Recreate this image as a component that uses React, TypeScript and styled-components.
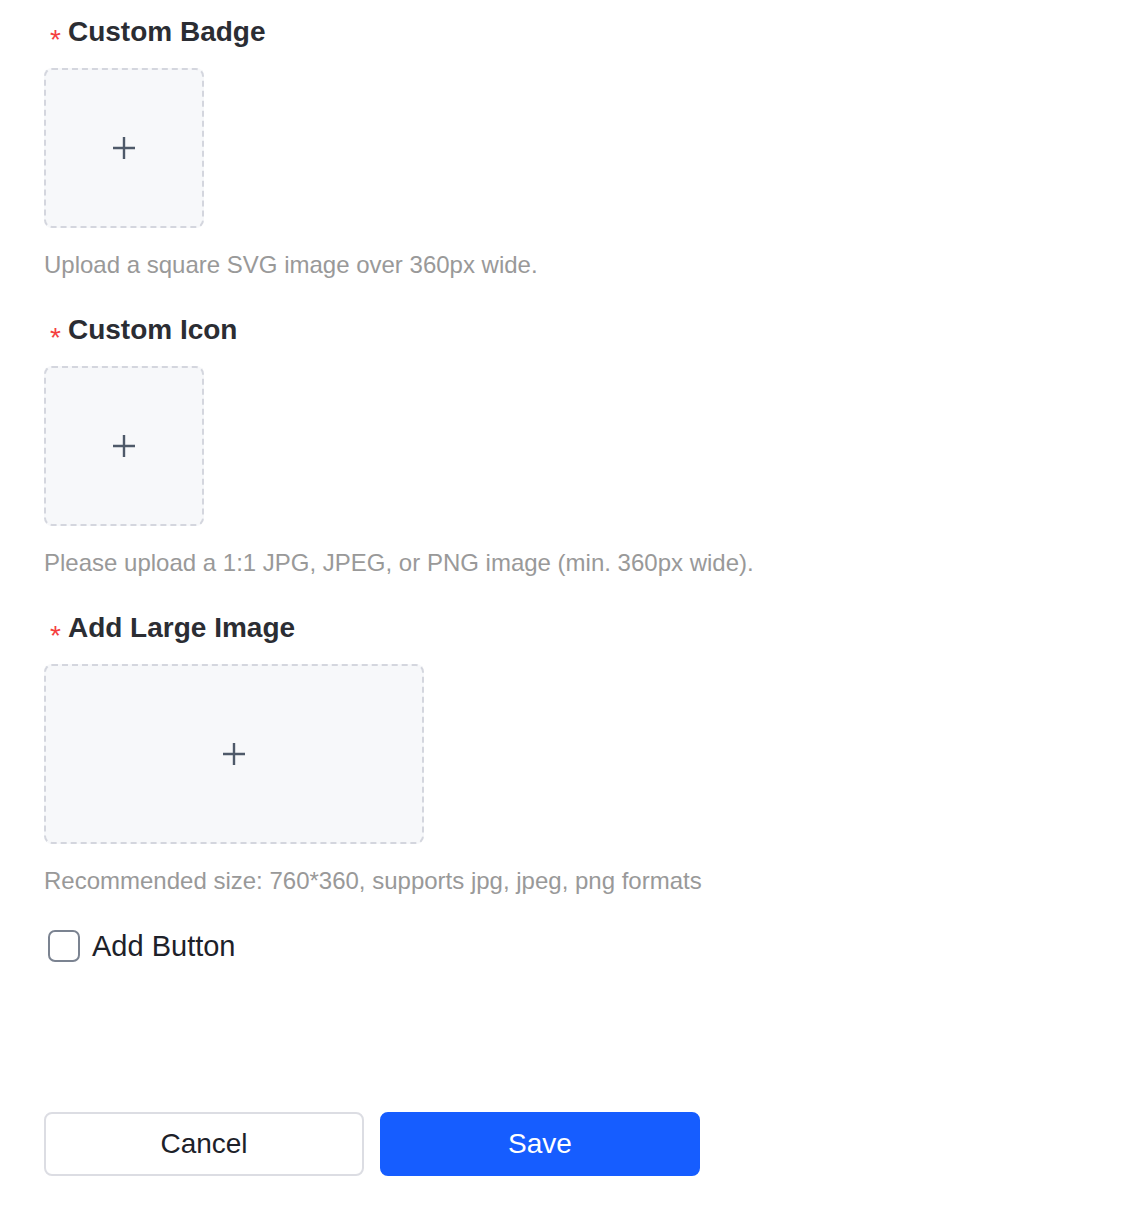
import React, { useState } from "react";
import styled, { createGlobalStyle } from "styled-components";

const GlobalStyle = createGlobalStyle`
  body {
    margin: 0;
    background: #ffffff;
    font-family: "Liberation Sans", Arial, sans-serif;
  }
`;

const Page = styled.div`
  display: flex;
  flex-direction: column;
  padding: 14px 44px 30px;
`;

const Field = styled.div`
  display: flex;
  flex-direction: column;
  align-items: flex-start;
  & + & {
    margin-top: 32px;
  }
`;

const Label = styled.div`
  display: flex;
  align-items: center;
  height: 36px;
  font-size: 28px;
  font-weight: 700;
  color: #2b2d33;
`;

const Required = styled.span`
  color: #f53f3f;
  font-size: 28px;
  font-weight: 400;
  line-height: 1;
  margin: 16px 7px 0 6px;
`;

const UploadBox = styled.button<{ $w: number; $h: number }>`
  all: unset;
  box-sizing: border-box;
  margin-top: 18px;
  width: ${({ $w }) => $w}px;
  height: ${({ $h }) => $h}px;
  display: flex;
  align-items: center;
  justify-content: center;
  background: #f7f8fa;
  border: 2px dashed #d4d6de;
  border-radius: 8px;
  cursor: pointer;
`;

const Hint = styled.div`
  margin-top: 22px;
  font-size: 24px;
  line-height: 30px;
  color: #999999;
`;

const CheckRow = styled.label`
  display: flex;
  align-items: center;
  gap: 12px;
  height: 36px;
  margin-top: 32px;
  padding-left: 4px;
  font-size: 29px;
  color: #1d2129;
  cursor: pointer;
`;

const CheckBox = styled.span<{ $on: boolean }>`
  box-sizing: border-box;
  width: 32px;
  height: 32px;
  border: 2px solid #7b8391;
  border-radius: 7px;
  background: ${({ $on }) => ($on ? "#165dff" : "#ffffff")};
`;

const Actions = styled.div`
  display: flex;
  gap: 16px;
  margin-top: 148px;
`;

const ActionButton = styled.button<{ $primary?: boolean }>`
  all: unset;
  box-sizing: border-box;
  width: 320px;
  height: 64px;
  display: flex;
  align-items: center;
  justify-content: center;
  border-radius: 8px;
  font-family: "Liberation Sans", Arial, sans-serif;
  font-size: 28px;
  cursor: pointer;
  color: ${({ $primary }) => ($primary ? "#ffffff" : "#1d2129")};
  background: ${({ $primary }) => ($primary ? "#165dff" : "#ffffff")};
  border: 2px solid ${({ $primary }) => ($primary ? "#165dff" : "#dcdde3")};
`;

const PlusIcon = () => (
  <svg width="22" height="22" viewBox="0 0 22 22">
    <path d="M11 0v22M0 11h22" stroke="#4e5969" strokeWidth="2.4" fill="none" />
  </svg>
);

const fields = [
  { label: "Custom Badge", w: 160, h: 160, hint: "Upload a square SVG image over 360px wide." },
  { label: "Custom Icon", w: 160, h: 160, hint: "Please upload a 1:1 JPG, JPEG, or PNG image (min. 360px wide)." },
  { label: "Add Large Image", w: 380, h: 180, hint: "Recommended size: 760*360, supports jpg, jpeg, png formats" },
];

const App = () => {
  const [addButton, setAddButton] = useState(false);

  return (
    <>
      <GlobalStyle />
      <Page>
        {fields.map((field) => (
          <Field key={field.label}>
            <Label>
              <Required>*</Required>
              {field.label}
            </Label>
            <UploadBox type="button" $w={field.w} $h={field.h}>
              <PlusIcon />
            </UploadBox>
            <Hint>{field.hint}</Hint>
          </Field>
        ))}
        <CheckRow onClick={() => setAddButton(!addButton)}>
          <CheckBox $on={addButton} />
          Add Button
        </CheckRow>
        <Actions>
          <ActionButton type="button">Cancel</ActionButton>
          <ActionButton type="button" $primary>
            Save
          </ActionButton>
        </Actions>
      </Page>
    </>
  );
};

export default App;
